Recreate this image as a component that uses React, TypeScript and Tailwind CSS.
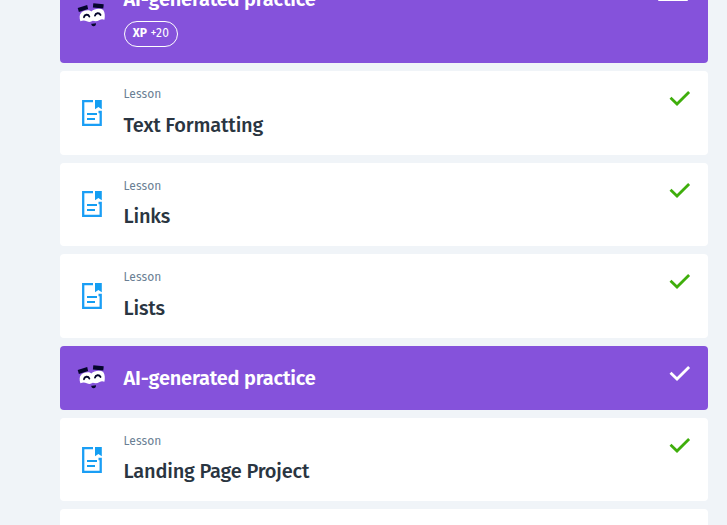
import React from "react";

const font = "font-['Fira_Sans','Noto_Sans','Open_Sans',sans-serif]";

function LessonIcon() {
  return (
    <svg width="20" height="26" viewBox="0 0 20 26" fill="none" className="block shrink-0">
      <path d="M11 1.1H1.2V24.8H18.7V12H16.5" stroke="#1a9ef5" strokeWidth="2.3" />
      <path d="M13 0H19.8V9.2L16.4 7L13 9.2Z" fill="#149ef2" />
      <path d="M5 14H15M5 19H13" stroke="#149ef2" strokeWidth="2.1" />
    </svg>
  );
}

function MaskIcon() {
  return (
    <svg width="29" height="26" viewBox="0 0 29 26" fill="none" className="block shrink-0">
      <path
        d="M3.4 19.3C2.2 16 2.3 12.4 4.4 10.6C7 8.2 12 7.4 14.4 9.4C17 6.6 23.5 5.8 26.2 8C28 10.5 28.2 14.5 27.4 17.8C25.6 16.8 24.2 17 22.6 18C20.4 19.4 18 19.5 15.8 18.8C14 20 12 20.3 9.8 19.2C7.4 18 5.4 18.2 3.4 19.3Z"
        fill="#fff"
      />
      <path d="M.7 5.9L10.2 3L11.1 7L1.9 10Z" fill="#05062d" strokeLinejoin="round" />
      <path d="M16.3 1.2L26.7 2.3L26.3 6.4L15.9 5.4Z" fill="#05062d" strokeLinejoin="round" />
      <path d="M7 15.2C7.4 12.4 11.2 11.8 12.3 14.5" stroke="#05062d" strokeWidth="1.9" strokeLinecap="round" />
      <path d="M18 13.6C18.6 10.8 22.2 10.3 23.5 12.9" stroke="#05062d" strokeWidth="1.9" strokeLinecap="round" />
      <path d="M14.2 21.7C16 21.9 17.5 21.5 19 21.2C19.2 23 17.8 24.4 16.5 24.2C15.2 24 14.2 22.9 14.2 21.7Z" fill="#05062d" />
    </svg>
  );
}

function Check({ className }: { className: string }) {
  return (
    <svg width="22" height="16" viewBox="0 0 22 16" fill="none" className={`block shrink-0 ${className}`}>
      <path d="M1.5 7.7L8 14L20.1 1.9" stroke="currentColor" strokeWidth="2.8" />
    </svg>
  );
}

function Lesson({ title }: { title: string }) {
  return (
    <article className="flex h-[83.6px] shrink-0 rounded bg-white pl-[22px] pr-[17px]">
      <div className="w-[41.5px] pt-[28.8px]">
        <LessonIcon />
      </div>
      <div className="flex-1 pt-[14px]">
        <p className="text-[12px] leading-[18px] tracking-[0.1px] text-[#6a7f94]">Lesson</p>
        <h2 className="mt-[6.6px] whitespace-nowrap text-[20px] font-medium leading-[30px] tracking-[-0.18px] text-[#2a3541]">
          {title}
        </h2>
      </div>
      <Check className="mt-[19px] text-[#3fae0c]" />
    </article>
  );
}

function PracticeTitle() {
  return (
    <h2 className="whitespace-nowrap text-[20px] font-semibold leading-[30px] tracking-[-0.2px] text-white">
      AI-generated practice
    </h2>
  );
}

export default function App() {
  return (
    <main className={`h-[525px] overflow-hidden bg-[#f0f4f8] pl-[60px] pr-[19px] ${font}`}>
      <div className="flex flex-col gap-2">
        <article className="flex h-[63px] shrink-0 rounded-b bg-[#8552db] px-[17px]">
          <div className="w-[46.5px] pt-[2px]">
            <MaskIcon />
          </div>
          <div className="flex-1">
            <div className="-mt-[16px]">
              <PracticeTitle />
            </div>
            <div className="ml-[0.5px] mt-[7px] flex h-[26px] w-[54px] items-center justify-center gap-[3.5px] rounded-full border border-white pb-[2px] text-[12px] leading-none text-white">
              <b>XP</b>
              <span className="tracking-[0.3px]">+20</span>
            </div>
          </div>
          <div className="mr-[3px] h-px w-[30px] rounded-b-full bg-white" />
        </article>
        <Lesson title="Text Formatting" />
        <Lesson title="Links" />
        <Lesson title="Lists" />
        <article className="flex h-16 shrink-0 rounded bg-[#8552db] px-[17px]">
          <div className="w-[46.5px] pt-[18px]">
            <MaskIcon />
          </div>
          <div className="flex-1 pt-[17px]">
            <PracticeTitle />
          </div>
          <Check className="mt-[19px] text-white" />
        </article>
        <Lesson title="Landing Page Project" />
        <article className="h-[83.6px] shrink-0 rounded bg-white" />
      </div>
    </main>
  );
}
